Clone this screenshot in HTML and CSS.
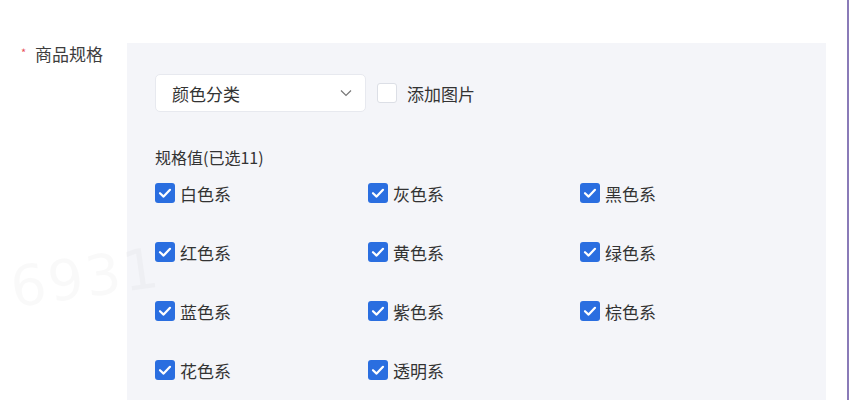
FILE: index.html
```html
<!DOCTYPE html>
<html lang="zh">
<head>
<meta charset="utf-8">
<link rel="stylesheet" href="styles.css">
</head>
<body>
<div class="page">
  <div class="label"><span class="req">*</span>商品规格</div>
  <div class="panel">
    <div class="top-row">
      <div class="select">
        <span>颜色分类</span>
        <svg class="chev" width="12" height="8" viewBox="0 0 12 8"><path d="M1 1.5 L6 6.5 L11 1.5" fill="none" stroke="#777" stroke-width="1.2"/></svg>
      </div>
      <label class="plain-check"><span class="box empty"></span>添加图片</label>
    </div>
    <div class="title">规格值(已选11)</div>
    <div class="grid">
      <div class="item"><span class="box on"><svg viewBox="0 0 20 20"><path d="M5 10.2 L8.6 13.6 L15 6.8" fill="none" stroke="#fff" stroke-width="2.2" stroke-linecap="round" stroke-linejoin="round"/></svg></span>白色系</div>
      <div class="item"><span class="box on"><svg viewBox="0 0 20 20"><path d="M5 10.2 L8.6 13.6 L15 6.8" fill="none" stroke="#fff" stroke-width="2.2" stroke-linecap="round" stroke-linejoin="round"/></svg></span>灰色系</div>
      <div class="item"><span class="box on"><svg viewBox="0 0 20 20"><path d="M5 10.2 L8.6 13.6 L15 6.8" fill="none" stroke="#fff" stroke-width="2.2" stroke-linecap="round" stroke-linejoin="round"/></svg></span>黑色系</div>
      <div class="item"><span class="box on"><svg viewBox="0 0 20 20"><path d="M5 10.2 L8.6 13.6 L15 6.8" fill="none" stroke="#fff" stroke-width="2.2" stroke-linecap="round" stroke-linejoin="round"/></svg></span>红色系</div>
      <div class="item"><span class="box on"><svg viewBox="0 0 20 20"><path d="M5 10.2 L8.6 13.6 L15 6.8" fill="none" stroke="#fff" stroke-width="2.2" stroke-linecap="round" stroke-linejoin="round"/></svg></span>黄色系</div>
      <div class="item"><span class="box on"><svg viewBox="0 0 20 20"><path d="M5 10.2 L8.6 13.6 L15 6.8" fill="none" stroke="#fff" stroke-width="2.2" stroke-linecap="round" stroke-linejoin="round"/></svg></span>绿色系</div>
      <div class="item"><span class="box on"><svg viewBox="0 0 20 20"><path d="M5 10.2 L8.6 13.6 L15 6.8" fill="none" stroke="#fff" stroke-width="2.2" stroke-linecap="round" stroke-linejoin="round"/></svg></span>蓝色系</div>
      <div class="item"><span class="box on"><svg viewBox="0 0 20 20"><path d="M5 10.2 L8.6 13.6 L15 6.8" fill="none" stroke="#fff" stroke-width="2.2" stroke-linecap="round" stroke-linejoin="round"/></svg></span>紫色系</div>
      <div class="item"><span class="box on"><svg viewBox="0 0 20 20"><path d="M5 10.2 L8.6 13.6 L15 6.8" fill="none" stroke="#fff" stroke-width="2.2" stroke-linecap="round" stroke-linejoin="round"/></svg></span>棕色系</div>
      <div class="item"><span class="box on"><svg viewBox="0 0 20 20"><path d="M5 10.2 L8.6 13.6 L15 6.8" fill="none" stroke="#fff" stroke-width="2.2" stroke-linecap="round" stroke-linejoin="round"/></svg></span>花色系</div>
      <div class="item"><span class="box on"><svg viewBox="0 0 20 20"><path d="M5 10.2 L8.6 13.6 L15 6.8" fill="none" stroke="#fff" stroke-width="2.2" stroke-linecap="round" stroke-linejoin="round"/></svg></span>透明系</div>
    </div>
  </div>
  <div class="edge"></div>
  <div class="wm wm-left">6931</div>
  <div class="wm wm-right">徐佟</div>
</div>
</body>
</html>
```
FILE: styles.css
```css
html, body {
  margin: 0;
  padding: 0;
  background: #ffffff;
}
body {
  font-family: "Noto Sans CJK SC", "Noto Sans", sans-serif;
  color: #333333;
}
.page {
  position: relative;
  width: 850px;
  height: 400px;
  overflow: hidden;
  display: flex;
  align-items: stretch;
}
.label {
  width: 127px;
  flex: none;
  box-sizing: border-box;
  padding: 41px 0 0 21px;
  font-size: 17px;
  line-height: 26px;
  color: #3d3d3d;
  display: flex;
  align-items: flex-start;
}
.req {
  color: #e8505b;
  font-size: 11px;
  line-height: 26px;
  width: 14px;
  margin-top: -2px;
}
.panel {
  flex: none;
  width: 699px;
  margin-top: 43px;
  background: #f4f5f9;
  box-sizing: border-box;
  padding: 31px 0 0 28px;
}
.edge {
  flex: none;
  width: 2px;
  margin-left: 21px;
  background: #8a7bb8;
}
.top-row {
  display: flex;
  align-items: center;
  gap: 11px;
}
.select {
  width: 211px;
  height: 38px;
  box-sizing: border-box;
  background: #ffffff;
  border: 1px solid #e7e9ef;
  border-radius: 5px;
  display: flex;
  align-items: center;
  justify-content: space-between;
  padding: 0 13px 0 16px;
  font-size: 17px;
  color: #333;
}
.chev {
  display: block;
}
.plain-check {
  display: flex;
  align-items: center;
  gap: 10px;
  font-size: 17px;
  color: #333;
}
.box {
  width: 20px;
  height: 20px;
  box-sizing: border-box;
  border-radius: 3px;
  flex: none;
  display: block;
}
.box.empty {
  background: #ffffff;
  border: 1px solid #dcdfe6;
}
.box.on {
  background: #2a6ee0;
}
.box.on svg {
  display: block;
  width: 20px;
  height: 20px;
}
.title {
  margin-top: 33px;
  font-size: 16px;
  line-height: 24px;
  color: #333;
}
.grid {
  margin-top: 12px;
  display: grid;
  grid-template-columns: 213px 212px 213px;
  row-gap: 35px;
}
.item {
  display: flex;
  align-items: center;
  gap: 5px;
  height: 24px;
  font-size: 17px;
  color: #333;
}
.wm {
  position: absolute;
  color: rgba(0, 0, 0, 0.022);
  font-family: "DejaVu Sans", sans-serif;
  pointer-events: none;
  line-height: 1;
}
.wm-left {
  left: 10px;
  top: 250px;
  font-size: 56px;
  transform: rotate(-8deg);
  letter-spacing: 2px;
}
.wm-right {
  left: 716px;
  top: 330px;
  font-size: 48px;
  transform: rotate(-10deg);
  font-family: "Noto Sans CJK SC", sans-serif;
}
```
